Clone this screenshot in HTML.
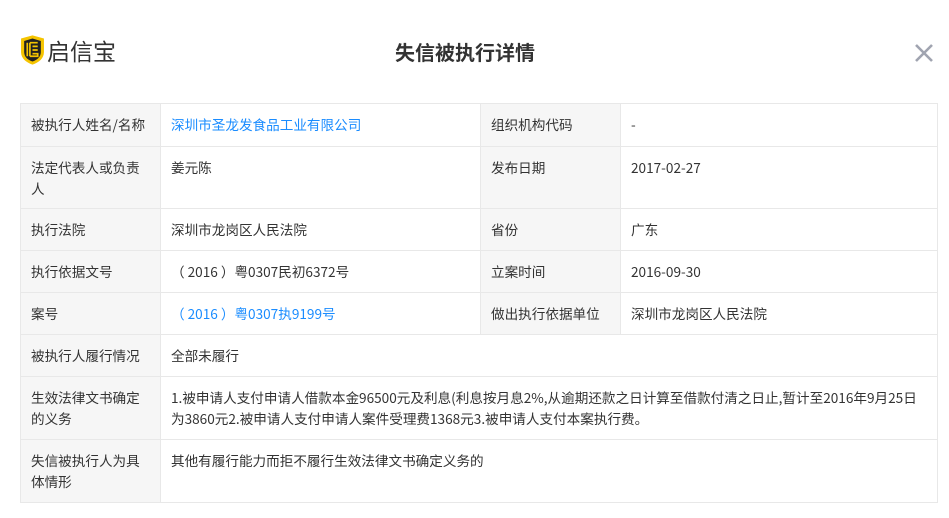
<!DOCTYPE html>
<html><head><meta charset="utf-8"><style>
*{margin:0;padding:0;box-sizing:border-box}
body{width:949px;height:518px;background:#fff;font-family:"Liberation Sans","Noto Sans CJK SC",sans-serif;color:#333;position:relative;overflow:hidden}
.logo{position:absolute;left:20px;top:34px;display:flex;align-items:center}
.logo span{font-family:"Noto Sans CJK SC",sans-serif;font-size:23px;color:#333;margin-left:2px;line-height:32px}
.title{position:absolute;left:0;width:930px;top:38px;text-align:center;font-size:20px;font-weight:bold;color:#333;font-family:"Noto Sans CJK SC",sans-serif;line-height:28px}
.close{position:absolute;left:914px;top:43px}
table{position:absolute;left:20px;top:103px;width:918px;border-collapse:collapse;table-layout:fixed;font-family:"Noto Sans CJK SC",sans-serif;font-size:13.6px;line-height:21px}
td{border:1px solid #e8e8e8;padding:10px 10px 0 10px;vertical-align:top;overflow:hidden}
td.k{background:#f6f6f6;color:#333}
td.b{word-break:break-all}
a{color:#1a8cff;text-decoration:none}
</style></head><body>
<div class="logo">
<svg width="25" height="32" viewBox="0 0 24 30"><path d="M12 1 L23 4 L23 17 C23 23 18 27 12 29 C6 27 1 23 1 17 L1 4 Z" fill="#f5c400"/><path d="M12 4 L20 6.3 L20 17 C20 21.5 16.5 24.5 12 26 C7.5 24.5 4 21.5 4 17 L4 6.3 Z" fill="#222"/><path d="M7 8 V21 M9.5 8 V21 M9.5 8 H17 M12 11.5 H17 M12 15 H17 M12 18.5 H17 V21 H9.5" stroke="#f5c400" stroke-width="1.6" fill="none"/></svg>
<span>启信宝</span></div>
<div class="title">失信被执行详情</div>
<svg class="close" width="20" height="20" viewBox="0 0 20 20"><path d="M2 2 L18 18 M18 2 L2 18" stroke="#a0a4b0" stroke-width="2.6"/></svg>
<table>
<colgroup><col style="width:140px"><col style="width:320px"><col style="width:140px"><col></colgroup>
<tr style="height:43px"><td class="k">被执行人姓名/名称</td><td><a>深圳市圣龙发食品工业有限公司</a></td><td class="k">组织机构代码</td><td>-</td></tr>
<tr style="height:62px"><td class="k">法定代表人或负责人</td><td>姜元陈</td><td class="k">发布日期</td><td>2017-02-27</td></tr>
<tr style="height:42px"><td class="k">执行法院</td><td>深圳市龙岗区人民法院</td><td class="k">省份</td><td>广东</td></tr>
<tr style="height:42px"><td class="k">执行依据文号</td><td>（ 2016 ）粤0307民初6372号</td><td class="k">立案时间</td><td>2016-09-30</td></tr>
<tr style="height:42px"><td class="k">案号</td><td><a>（ 2016 ）粤0307执9199号</a></td><td class="k">做出执行依据单位</td><td>深圳市龙岗区人民法院</td></tr>
<tr style="height:42px"><td class="k">被执行人履行情况</td><td colspan="3">全部未履行</td></tr>
<tr style="height:63px"><td class="k">生效法律文书确定的义务</td><td colspan="3" class="b">1.被申请人支付申请人借款本金96500元及利息(利息按月息2%,从逾期还款之日计算至借款付清之日止,暂计至2016年9月25日为3860元2.被申请人支付申请人案件受理费1368元3.被申请人支付本案执行费。</td></tr>
<tr style="height:63px"><td class="k">失信被执行人为具体情形</td><td colspan="3">其他有履行能力而拒不履行生效法律文书确定义务的</td></tr>
</table>
</body></html>
